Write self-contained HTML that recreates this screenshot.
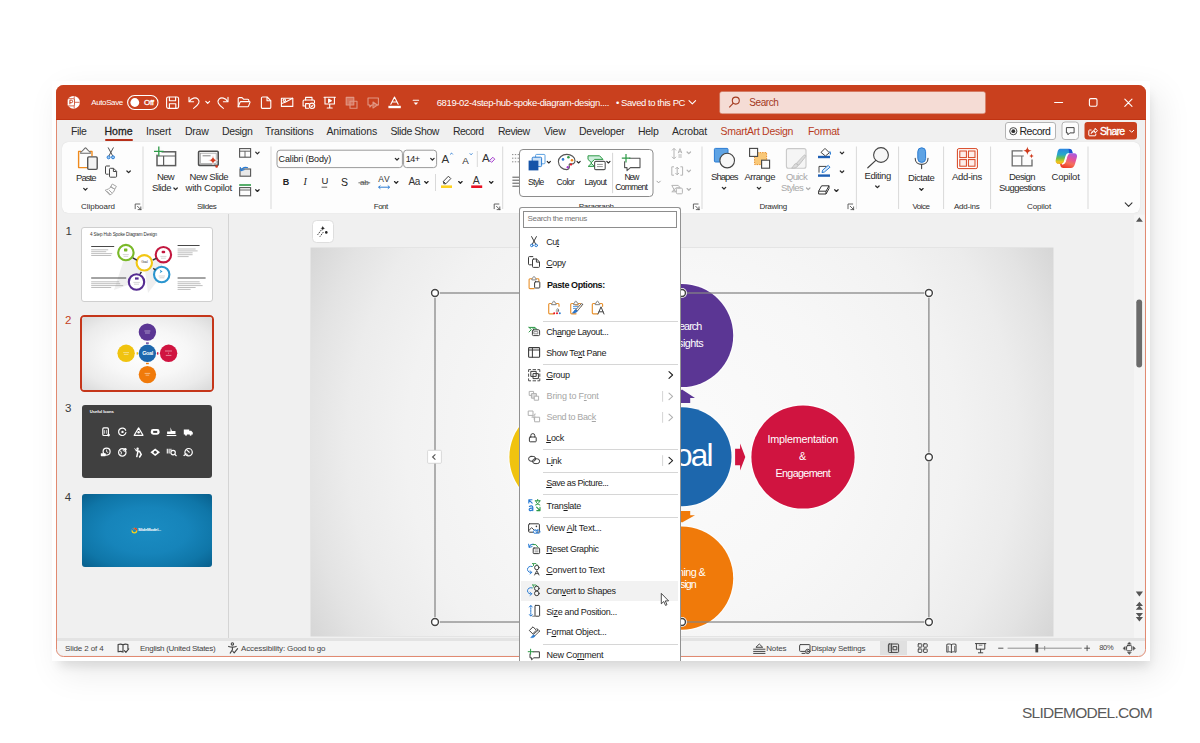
<!DOCTYPE html>
<html>
<head>
<meta charset="utf-8">
<title>PowerPoint</title>
<style>
*{box-sizing:border-box;margin:0;padding:0}
html,body{width:1200px;height:743px;overflow:hidden;background:#fff}
body{font-family:"Liberation Sans",sans-serif;color:#222;position:relative;font-size:10px;line-height:1}
.a{position:absolute}
.t{position:absolute;white-space:nowrap;line-height:1.16}
svg{position:absolute;left:0;top:0;overflow:visible}
#frame{left:52px;top:81px;width:1098px;height:580px;background:#fff;box-shadow:9px 12px 32px rgba(0,0,0,.085),3px 9px 10px -4px rgba(0,0,0,.10)}
#win{left:55.500px;top:85px;width:1090.500px;height:571.800px;border-radius:7.500px;background:#f0f0f0;border:1.700px solid #e18a71}
#title{left:55.500px;top:85px;width:1090.500px;height:34.500px;background:#c9401e;border-radius:7.500px 7.500px 0 0;border-bottom:1px solid #c03312}
#ribbon{left:62px;top:141.500px;width:1078px;height:71.700px;background:#fdfdfd;border-radius:6px;box-shadow:0 0 1px rgba(0,0,0,.15)}
.vs{width:1px;background:#dcdcdc;top:147px;height:60px}
u{text-decoration-thickness:1px;text-underline-offset:1px}
</style>
</head>
<body>
<div class="a" id="frame"></div>
<div class="a" id="win"></div>
<div class="a" id="title"></div>
<div class="a" id="ribbon"></div>
<svg width="1200" height="743" viewBox="0 0 1200 743"><circle cx="73.5" cy="102.3" r="6.400" fill="#fff"/><path d="M74.200 96.200v12.200M74.200 102.300h5.600" stroke="#c9401e" stroke-width=".9" opacity=".85"/><rect x="67.300" y="98.700" width="7.200" height="7.200" rx="1.200" fill="#fff" stroke="#c9401e" stroke-width=".8"/><path d="M69.900 104.300v-4.100h1.500a1.250 1.250 0 0 1 0 2.500h-1.500" stroke="#c9401e" stroke-width="1" fill="none"/><rect x="127.6" y="95.5" width="30.4" height="14" rx="7" stroke="#fff" fill="none" stroke-width="1.1" stroke-linecap="round" stroke-linejoin="round" stroke-width="1.2"/><circle cx="134.8" cy="102.5" r="4.4" fill="#fff"/><g stroke="#fff" fill="none" stroke-width="1.1" stroke-linecap="round" stroke-linejoin="round"><rect x="166.6" y="97" width="12" height="11.4" rx="1.6"/><path d="M169.4 97.2v3.6h6.2v-3.6M169.4 108.2v-4.4h6.4v4.4"/></g><g stroke="#fff" fill="none" stroke-width="1.1" stroke-linecap="round" stroke-linejoin="round"><path d="M189 97.2v4.6h4.6"/><path d="M189.4 101.4c2-3.4 6.3-4.6 8.6-2.2 2.4 2.5 .8 5.400 -4.400 9.200"/></g><path d="M205.8 101.4l1.9 1.9 1.900 -1.900" stroke="#fff" fill="none" stroke-width="1.1" stroke-linecap="round" stroke-linejoin="round"/><g stroke="#fff" fill="none" stroke-width="1.1" stroke-linecap="round" stroke-linejoin="round"><path d="M228 97.2v4.6h-4.6"/><path d="M227.600 101.400c-2 -3.400 -6.300 -4.600 -8.600 -2.200 -2.400 2.500 -.8 5.400 4.400 9.200"/></g><g stroke="#fff" fill="none" stroke-width="1.1" stroke-linecap="round" stroke-linejoin="round"><path d="M238.200 106.800v-8.200a1 1 0 0 1 1 -1h2.800l1.500 1.600h4.300a1 1 0 0 1 1 1v1.300"/><path d="M238.200 106.800l1.800 -4.600a1 1 0 0 1 .9 -.6h8.500a.6 .6 0 0 1 .6 .800l-1.500 3.700a1 1 0 0 1 -.9 .7z"/></g><g stroke="#fff" fill="none" stroke-width="1.1" stroke-linecap="round" stroke-linejoin="round"><path d="M262.600 97h4.500l3.700 3.700v6.500a1.200 1.200 0 0 1 -1.200 1.200h-7a1.200 1.200 0 0 1 -1.200 -1.200v-9a1.200 1.200 0 0 1 1.200 -1.200z"/><path d="M267 97.200v3.600h3.600"/></g><g stroke="#fff" fill="none" stroke-width="1.1" stroke-linecap="round" stroke-linejoin="round"><path d="M281.400 98.200h11.400v8.200h-11.400z"/><path d="M281.600 103.400l3.600 -1.200 7.400 -4"/><circle cx="284.300" cy="100.200" r="1.200"/></g><g stroke="#fff" fill="none" stroke-width="1.1" stroke-linecap="round" stroke-linejoin="round"><path d="M305.600 100v-2.600h6.400v2.600"/><path d="M305.400 106h-2.300v-4.800a1.200 1.200 0 0 1 1.200 -1.200h9a1.200 1.200 0 0 1 1.200 1.200v1.600"/><path d="M305.600 103.600h3.400M305.600 103.600v4.600h3"/><circle cx="312" cy="105.800" r="2.700"/><path d="M310.900 105.900l.8 .8 1.500 -1.700"/></g><g stroke="#fff" fill="none" stroke-width="1.1" stroke-linecap="round" stroke-linejoin="round"><path d="M324 97.200h11.400M325 97.400v6.600h9.400v-6.600M329.700 104v3.800M327.200 108h5"/><path d="M328.600 99l2.800 1.700 -2.800 1.700z" fill="#fff"/></g><g stroke="#fff" fill="none" stroke-width="1.1" stroke-linecap="round" stroke-linejoin="round" opacity=".45"><rect x="346.200" y="97.400" width="7.600" height="7.600" fill="#fff" fill-opacity=".6"/><rect x="350" y="101.200" width="7" height="7"/></g><g stroke="#fff" fill="none" stroke-width="1.1" stroke-linecap="round" stroke-linejoin="round" opacity=".45"><path d="M368 98h10.400v7h-6.600l-2 2v-2H368z"/><path d="M373 102l4.400 3 -4.400 3z"/></g><g stroke="#fff" fill="none" stroke-width="1.1" stroke-linecap="round" stroke-linejoin="round"><path d="M390.800 104.200l3.700 -7.200 3.700 7.200M392 102h5"/></g><rect x="388.400" y="105.800" width="12.400" height="2.400" fill="#fff"/><path d="M413.200 100.200h5.400" stroke="#fff" fill="none" stroke-width="1.1" stroke-linecap="round" stroke-linejoin="round"/><path d="M413.600 102.600h4.600l-2.300 2.500z" fill="#fff"/><rect x="719.600" y="91.500" width="266" height="22.300" rx="2.500" fill="#f5dcd5" stroke="#c9674d" stroke-width=".5"/><g stroke="#a33a1f" fill="none" stroke-width="1.100"><circle cx="735.800" cy="100.600" r="3.500"/><path d="M733.300 103.200l-4 4.200"/></g><path d="M689 100.600l3.300 3.300 3.300 -3.300" stroke="#fff" fill="none" stroke-width="1.1" stroke-linecap="round" stroke-linejoin="round"/><path d="M1054.600 102.500h8" stroke="#fff" fill="none" stroke-width="1.1" stroke-linecap="round" stroke-linejoin="round"/><rect x="1089.400" y="98.600" width="7.600" height="7.600" rx="1.400" stroke="#fff" fill="none" stroke-width="1.1" stroke-linecap="round" stroke-linejoin="round"/><path d="M1124.800 99.200l7.200 7.200M1132 99.200l-7.200 7.200" stroke="#fff" fill="none" stroke-width="1.1" stroke-linecap="round" stroke-linejoin="round"/></svg><div class="t" id="t1" style="left:91.3px;top:97.96px;font-size:8px;color:#fff;letter-spacing:-0.4px;">AutoSave</div><div class="t" id="t2" style="left:144px;top:97.96px;font-size:8px;color:#fff;letter-spacing:-0.31px;-webkit-text-stroke:.3px #fff;">Off</div><div class="t" id="t3" style="left:436.7px;top:96.89px;font-size:9.5px;color:#fff;letter-spacing:-0.374px;">6819-02-4step-hub-spoke-diagram-design....</div><div class="t" id="t4" style="left:616px;top:96.89px;font-size:9.5px;color:#fff;letter-spacing:-0.43px;">• Saved to this PC</div><div class="t" id="t5" style="left:749.3px;top:97.0px;font-size:10px;color:#a3381d;letter-spacing:-0.415px;">Search</div><div class="t" id="t6" style="left:71px;top:125.11px;font-size:10.5px;color:#2b2b2b;letter-spacing:-0.355px;">File</div><div class="t" id="t7" style="left:146px;top:125.11px;font-size:10.5px;color:#2b2b2b;letter-spacing:-0.211px;">Insert</div><div class="t" id="t8" style="left:185px;top:125.11px;font-size:10.5px;color:#2b2b2b;letter-spacing:-0.254px;">Draw</div><div class="t" id="t9" style="left:222px;top:125.11px;font-size:10.5px;color:#2b2b2b;letter-spacing:-0.365px;">Design</div><div class="t" id="t10" style="left:265px;top:125.11px;font-size:10.5px;color:#2b2b2b;letter-spacing:-0.224px;">Transitions</div><div class="t" id="t11" style="left:326.5px;top:125.11px;font-size:10.5px;color:#2b2b2b;letter-spacing:-0.145px;">Animations</div><div class="t" id="t12" style="left:390.5px;top:125.11px;font-size:10.5px;color:#2b2b2b;letter-spacing:-0.403px;">Slide Show</div><div class="t" id="t13" style="left:453px;top:125.11px;font-size:10.5px;color:#2b2b2b;letter-spacing:-0.56px;">Record</div><div class="t" id="t14" style="left:498px;top:125.11px;font-size:10.5px;color:#2b2b2b;letter-spacing:-0.49px;">Review</div><div class="t" id="t15" style="left:544px;top:125.11px;font-size:10.5px;color:#2b2b2b;letter-spacing:-0.27px;">View</div><div class="t" id="t16" style="left:579px;top:125.11px;font-size:10.5px;color:#2b2b2b;letter-spacing:-0.264px;">Developer</div><div class="t" id="t17" style="left:638px;top:125.11px;font-size:10.5px;color:#2b2b2b;letter-spacing:-0.277px;">Help</div><div class="t" id="t18" style="left:672px;top:125.11px;font-size:10.5px;color:#2b2b2b;letter-spacing:-0.17px;">Acrobat</div><div class="t" id="t19" style="left:104.5px;top:125.11px;font-size:10.5px;color:#1e1e1e;letter-spacing:-0.004px;-webkit-text-stroke:.3px #1e1e1e;">Home</div><div class="a" style="left:105px;top:139.300px;width:27.500px;height:1.700px;background:#b7301a;border-radius:1px"></div><div class="t" id="t20" style="left:720.5px;top:125.11px;font-size:10.5px;color:#b83b1d;letter-spacing:-0.302px;">SmartArt Design</div><div class="t" id="t21" style="left:808px;top:125.11px;font-size:10.5px;color:#b83b1d;letter-spacing:-0.294px;">Format</div><div class="a" style="left:1004.500px;top:122px;width:51px;height:17.500px;border:1px solid #b4b4b4;border-radius:3px;background:#fdfdfd"></div><svg width="1200" height="743" viewBox="0 0 1200 743"><circle cx="1013.300" cy="131.200" r="3.600" fill="none" stroke="#333" stroke-width=".9"/><circle cx="1013.300" cy="131.200" r="1.900" fill="#333"/><rect x="1062" y="122" width="16.500" height="17.500" rx="3" fill="#fdfdfd" stroke="#b4b4b4"/><path d="M1066.400 127.600h7.700v5.300h-4.300l-1.900 1.900v-1.900h-1.500z" fill="none" stroke="#333" stroke-width=".9" stroke-linejoin="round"/><rect x="1084.500" y="122" width="52.500" height="17.500" rx="3" fill="#c9401e"/><g stroke="#fff" fill="none" stroke-width="1" stroke-linecap="round" stroke-linejoin="round"><path d="M1091.200 130h-1.600a.8 .8 0 0 0 -.8 .8v4.200a.8 .8 0 0 0 .8 .8h5.400a.8 .8 0 0 0 .8 -.8v-1"/><path d="M1091.400 133.200c.5 -2 1.700 -3 3.600 -3.200v-1.700l2.500 2.400 -2.500 2.400v-1.600c-1.500 0 -2.700 .5 -3.600 1.700z"/><path d="M1129.700 130.300l2 2 2 -2"/></g></svg><div class="t" id="t22" style="left:1019.5px;top:125.11px;font-size:10.5px;color:#222;letter-spacing:-0.477px;">Record</div><div class="t" id="t23" style="left:1100px;top:125.11px;font-size:10.5px;color:#fff;letter-spacing:-0.726px;-webkit-text-stroke:.35px #fff;">Share</div><svg width="1200" height="743" viewBox="0 0 1200 743"><path d="M143 146.500v62.500" stroke="#d9d9d9" stroke-width="1"/><path d="M271 146.500v62.500" stroke="#d9d9d9" stroke-width="1"/><path d="M502.7 146.500v62.500" stroke="#d9d9d9" stroke-width="1"/><path d="M702 146.500v62.500" stroke="#d9d9d9" stroke-width="1"/><path d="M856.4 146.500v62.500" stroke="#d9d9d9" stroke-width="1"/><path d="M898.6 146.500v62.500" stroke="#d9d9d9" stroke-width="1"/><path d="M943.6 146.500v62.500" stroke="#d9d9d9" stroke-width="1"/><path d="M990.6 146.500v62.500" stroke="#d9d9d9" stroke-width="1"/><path d="M1088 146.500v62.500" stroke="#d9d9d9" stroke-width="1"/><g fill="none" stroke-linejoin="round"><path d="M81 151.400h-2.400v16.200h8.600M89.800 151.400h2.200v4.800" stroke="#ef8a1d" stroke-width="1.400"/><path d="M80.600 153.200c0 -1.300 .6 -2 1.700 -2.200l2.700 -2.900c.3 -.3 .7 -.3 1 0l2.700 2.900c1.100 .2 1.700 .9 1.700 2.200z" stroke="#6a6a6a" stroke-width="1.100" fill="#fbfbfb"/><rect x="87.700" y="156.900" width="9.500" height="12.500" rx="1.100" stroke="#555" stroke-width="1.400" fill="#f4f4f4"/></g><path d="M83.70 188.35l1.70 1.70 1.70 -1.70" stroke="#2a2a2a" stroke-width="1.25" fill="none" stroke-linecap="round" stroke-linejoin="round"/><g fill="none" stroke="#444" stroke-width=".95" stroke-linecap="round"><path d="M108.300 147.800l4.300 8M113.300 147.800l-4.300 8"/></g><g fill="#9ccaf2" stroke="#2b7cd3" stroke-width="1"><circle cx="108.600" cy="157.300" r="1.500"/><circle cx="113" cy="157.300" r="1.500"/></g><g fill="none" stroke="#444" stroke-width="1" stroke-linejoin="round"><path d="M108.600 174.200h-2.200a.9 .9 0 0 1 -.9 -.9v-6.400a.9 .9 0 0 1 .9 -.9h3.500"/><path d="M110.400 168.300h3.200l3 3v5a.9 .9 0 0 1 -.9 .9h-5.300a.9 .9 0 0 1 -.9 -.9v-7.100a.9 .9 0 0 1 .9 -.9z" fill="#fbfbfb"/><path d="M113.400 168.500v3h3"/></g><path d="M126.90 170.95l1.70 1.70 1.70 -1.70" stroke="#2a2a2a" stroke-width="1.25" fill="none" stroke-linecap="round" stroke-linejoin="round"/><g fill="none" stroke="#a6a6a6" stroke-width="1" stroke-linejoin="round" stroke-linecap="round"><path d="M112.600 184.200l3.800 2.200 -1.600 2.800 -3.800 -2.200z"/><path d="M111 187l3.800 2.200c-.6 2.400 -2.400 4.600 -5 5.800l-4.600 -4.800c2.200 -.6 4.200 -1.600 5.800 -3.200zM107.400 191.600l2.200 2.200M109.400 190.400l2.200 2.200" /></g><g stroke="#555" stroke-width=".9" fill="none" stroke-linecap="square"><path d="M139.8 204.0h-4.600v4.600"/><path d="M137.6 206.4l3 3M140.8 209.6v-2.600M140.8 209.6h-2.600"/></g><g fill="none"><rect x="157" y="151.800" width="18.600" height="13.800" stroke="#5c5c5c" stroke-width="1.500"/><path d="M157 156h18.600M163.600 156v9.600" stroke="#5c5c5c" stroke-width="1.200"/><rect x="153.500" y="146.600" width="8" height="8" fill="#fbfbfb" stroke="none"/><path d="M158.800 146.600v9.600M154 151.400h9.600" stroke="#2e9a47" stroke-width="1.300"/></g><path d="M173.90 187.95l1.70 1.70 1.70 -1.70" stroke="#2a2a2a" stroke-width="1.25" fill="none" stroke-linecap="round" stroke-linejoin="round"/><g fill="none"><rect x="198.600" y="151.200" width="19.600" height="14.200" rx="1" stroke="#4f4f4f" stroke-width="1.600"/><rect x="200.600" y="153.200" width="15.600" height="10.200" stroke="#999" stroke-width=".7"/><path d="M202.600 155.800h8" stroke="#777" stroke-width=".9"/><path d="M213 155.400c.5 3.200 1.600 4.300 4.800 4.800 -3.200 .5 -4.300 1.600 -4.800 4.800 -.5 -3.200 -1.600 -4.300 -4.800 -4.800 3.200 -.5 4.300 -1.600 4.800 -4.800z" fill="#d13b1f" stroke="#fbfbfb" stroke-width=".6"/><circle cx="216.600" cy="166.400" r="1.300" fill="#d13b1f"/></g><g fill="none" stroke="#555" stroke-width="1.100"><rect x="239.600" y="148.600" width="11" height="8.600"/><path d="M239.600 151.200h11M245 151.200v6" stroke-width=".9"/></g><path d="M255.70 152.15l1.70 1.70 1.70 -1.70" stroke="#2a2a2a" stroke-width="1.25" fill="none" stroke-linecap="round" stroke-linejoin="round"/><g fill="none"><rect x="240" y="169" width="10.600" height="7.200" stroke="#555" stroke-width="1.100" fill="#e9e9e9"/><path d="M241.200 170.600c1 -3 4 -4 6.800 -2.800" stroke="#2b7cd3" stroke-width="1.200"/><path d="M240.200 167l.8 3.800 3.600 -1.200" stroke="#2b7cd3" stroke-width="1.100" stroke-linejoin="round"/></g><g fill="none"><rect x="239.600" y="187.600" width="11" height="8.200" stroke="#555" stroke-width="1.100"/><path d="M239.600 190h11" stroke="#555" stroke-width=".9"/><path d="M239.200 185h11.800" stroke="#2e9a47" stroke-width="1.600"/></g><path d="M255.70 189.75l1.70 1.70 1.70 -1.70" stroke="#2a2a2a" stroke-width="1.25" fill="none" stroke-linecap="round" stroke-linejoin="round"/><rect x="277" y="150.200" width="125.400" height="17.400" rx="3" fill="#fdfdfd" stroke="#8f8f8f" stroke-width=".9"/><rect x="403.600" y="150.200" width="33" height="17.400" rx="3" fill="#fdfdfd" stroke="#8f8f8f" stroke-width=".9"/><path d="M395.30 158.35l1.70 1.70 1.70 -1.70" stroke="#2a2a2a" stroke-width="1.25" fill="none" stroke-linecap="round" stroke-linejoin="round"/><path d="M430.70 158.35l1.70 1.70 1.70 -1.70" stroke="#2a2a2a" stroke-width="1.25" fill="none" stroke-linecap="round" stroke-linejoin="round"/><path d="M450.200 154.400l1.300 -1.300 1.300 1.300" stroke="#2b7cd3" stroke-width="1" fill="none"/><path d="M469.800 153.400l1.300 1.300 1.300 -1.300" stroke="#2b7cd3" stroke-width="1" fill="none"/><path d="M477.300 151v16" stroke="#d9d9d9"/><path d="M489.600 160.400l3.200 -3.200 2 2 -3.200 3.200z" fill="#f3e6fb" stroke="#a43cc9" stroke-width=".9" stroke-linejoin="round"/><path d="M321.600 187.200h5.600" stroke="#333" stroke-width=".8"/><path d="M358.400 182.800h11.800" stroke="#555" stroke-width=".8"/><g stroke="#2b7cd3" stroke-width="1" fill="none" stroke-linejoin="round"><path d="M378.600 187.200h11"/><path d="M380.400 185.600l-1.800 1.600 1.800 1.600M387.800 185.600l1.800 1.600 -1.800 1.600"/></g><path d="M394.50 181.55l1.70 1.70 1.70 -1.70" stroke="#2a2a2a" stroke-width="1.25" fill="none" stroke-linecap="round" stroke-linejoin="round"/><path d="M424.70 181.55l1.70 1.70 1.70 -1.70" stroke="#2a2a2a" stroke-width="1.25" fill="none" stroke-linecap="round" stroke-linejoin="round"/><path d="M435.500 174v17" stroke="#d9d9d9"/><rect x="441" y="185.400" width="11" height="2.600" fill="#ffd21f"/><g fill="none" stroke="#444" stroke-width="1" stroke-linejoin="round"><path d="M443.800 183.800l-.4 -2.400 5 -5.200 2.400 2.400 -5 5.200z"/><path d="M443.400 181.400l2.400 2.400"/></g><path d="M458.70 181.55l1.70 1.70 1.70 -1.70" stroke="#2a2a2a" stroke-width="1.25" fill="none" stroke-linecap="round" stroke-linejoin="round"/><rect x="471.200" y="185.400" width="11" height="2.600" fill="#e81123"/><path d="M489.50 181.55l1.70 1.70 1.70 -1.70" stroke="#2a2a2a" stroke-width="1.25" fill="none" stroke-linecap="round" stroke-linejoin="round"/><g stroke="#555" stroke-width=".9" fill="none" stroke-linecap="square"><path d="M498.8 204.0h-4.600v4.600"/><path d="M496.6 206.4l3 3M499.8 209.6v-2.600M499.8 209.6h-2.600"/></g></svg><div class="t" id="t24" style="left:76px;top:172.49px;font-size:9.5px;color:#2b2b2b;letter-spacing:-0.939px;">Paste</div><div class="t" id="t25" style="left:81px;top:201.96px;font-size:8px;color:#2e2e2e;letter-spacing:-0.028px;">Clipboard</div><div class="t" id="t26" style="left:157px;top:171.29px;font-size:9.5px;color:#2b2b2b;letter-spacing:-0.672px;">New</div><div class="t" id="t27" style="left:152px;top:182.49px;font-size:9.5px;color:#2b2b2b;letter-spacing:-0.425px;">Slide</div><div class="t" id="t28" style="left:189.6px;top:171.29px;font-size:9.5px;color:#2b2b2b;letter-spacing:-0.487px;">New Slide</div><div class="t" id="t29" style="left:185.6px;top:182.49px;font-size:9.5px;color:#2b2b2b;letter-spacing:-0.226px;">with Copilot</div><div class="t" id="t30" style="left:197px;top:201.96px;font-size:8px;color:#2e2e2e;letter-spacing:-0.399px;">Slides</div><div class="t" id="t31" style="left:278.6px;top:153.78px;font-size:9px;color:#222;letter-spacing:-0.151px;">Calibri (Body)</div><div class="t" id="t32" style="left:405.8px;top:153.78px;font-size:9px;color:#222;letter-spacing:-0.56px;">14+</div><div class="t" id="t33" style="left:441.6px;top:152.73px;font-size:11.5px;color:#333;letter-spacing:0.328px;">A</div><div class="t" id="t34" style="left:462.2px;top:154.52px;font-size:9.8px;color:#333;letter-spacing:0.453px;">A</div><div class="t" id="t35" style="left:482px;top:152.13px;font-size:11.5px;color:#333;letter-spacing:-0.072px;">A</div><div class="t" id="t36" style="left:282.8px;top:176.98px;font-size:9px;color:#222;font-weight:700;letter-spacing:-0.9px;">B</div><div class="t" id="t37" style="left:303.4px;top:176.2px;font-size:10px;color:#222;letter-spacing:0.256px;font-family:'Liberation Serif',serif;font-style:italic;">I</div><div class="t" id="t38" style="left:321.4px;top:175.49px;font-size:9.5px;color:#222;letter-spacing:-1.075px;">U</div><div class="t" id="t39" style="left:341px;top:175.91px;font-size:10.5px;color:#222;letter-spacing:-1.416px;">S</div><div class="t" id="t40" style="left:360px;top:177.56px;font-size:8px;color:#555;letter-spacing:-0.153px;">ab</div><div class="t" id="t41" style="left:378.2px;top:174.67px;font-size:8.5px;color:#333;letter-spacing:0.741px;">AV</div><div class="t" id="t42" style="left:408.4px;top:176.2px;font-size:10px;color:#333;letter-spacing:-0.217px;">Aa</div><div class="t" id="t43" style="left:472.8px;top:173.91px;font-size:10.5px;color:#333;letter-spacing:0.784px;">A</div><div class="t" id="t44" style="left:373.8px;top:201.96px;font-size:8px;color:#2e2e2e;letter-spacing:-0.504px;">Font</div><svg width="1200" height="743" viewBox="0 0 1200 743"><g stroke="#8a8a8a" stroke-width="1" stroke-dasharray="1.400 1.400"><path d="M512 154.600h7M512 158.200h7M512 161.800h7"/></g><g stroke="#555" stroke-width="1"><path d="M512.400 177.200h7M512.400 180.200h7M512.400 183.200h7M512.400 186.200h7"/></g><rect x="519.500" y="149.500" width="133.500" height="47" rx="3.500" fill="#fff" stroke="#8c8c8c" stroke-width="1"/><g stroke-linejoin="round"><rect x="535.600" y="154.400" width="9.400" height="9.400" rx="1" fill="#fff" stroke="#5aa0e0" stroke-width="1"/><rect x="532.200" y="157.200" width="9.400" height="9.400" rx="1" fill="#cfe3f7" stroke="#2b7cd3" stroke-width="1"/><rect x="528.600" y="160.600" width="9.800" height="9.800" fill="#1553a8"/></g><path d="M547.20 161.40l1.60 1.60 1.60 -1.60" stroke="#222" stroke-width="1.1" fill="none" stroke-linecap="round" stroke-linejoin="round"/><path d="M566.800 154.400c4.600 0 8.200 2.800 8.200 6.400 0 2.600 -2.200 3.400 -3.800 3 -1.400 -.4 -2.400 .4 -2 1.800 .6 1.800 -.2 4 -2.400 4 -4 0 -8.400 -3 -8.400 -8 0 -4 3.800 -7.200 8.400 -7.200z" fill="#fff" stroke="#555" stroke-width="1.100"/><circle cx="563" cy="159.400" r="1.300" fill="#2b7cd3"/><circle cx="568.400" cy="157.200" r="1.300" fill="#2e9a47"/><circle cx="572" cy="160.200" r="1.300" fill="#f28a1a"/><circle cx="567.800" cy="167.200" r="1.200" fill="#a43cc9"/><circle cx="571" cy="164.600" r="1.100" fill="#e81123"/><path d="M577.00 161.40l1.60 1.60 1.60 -1.60" stroke="#222" stroke-width="1.1" fill="none" stroke-linecap="round" stroke-linejoin="round"/><path d="M588 155.800h11.600l3.400 3.600h-8.400l-3.800 3.600 3.800 3.400h-6.400l3.600 -3.400 -3.800 -3.600z" fill="#cfeedd" stroke="#2e9a47" stroke-width="1" stroke-linejoin="round"/><rect x="594.600" y="161.400" width="10.600" height="8.200" rx="1.200" fill="#fff" stroke="#555" stroke-width="1.100"/><path d="M597 164.400h5.800M597 166.600h5.800" stroke="#777" stroke-width=".8"/><path d="M606.80 161.40l1.60 1.60 1.60 -1.60" stroke="#222" stroke-width="1.1" fill="none" stroke-linecap="round" stroke-linejoin="round"/><path d="M612.600 152.800v40.400" stroke="#d5d5d5"/><path d="M624.600 158.200h15.400v9.400h-9.600l-3.400 3v-3h-2.400z" fill="#fff" stroke="#555" stroke-width="1.100" stroke-linejoin="round"/><rect x="621.500" y="153.800" width="7.500" height="7.500" fill="#fff"/><path d="M626 154v8.600M621.800 158.200h8.600" stroke="#2e9a47" stroke-width="1.200"/><path d="M656.90 181.15l1.70 1.70 1.70 -1.70" stroke="#a0a0a0" stroke-width="1" fill="none" stroke-linecap="round" stroke-linejoin="round"/><g stroke="#b4b4b4" stroke-width="1" fill="none" stroke-linejoin="round"><path d="M674 148.600v10M672 156.800l2 2 2 -2M672 150.400l2 -2 2 2"/><path d="M678.200 153.200l1.800 -4.600 1.800 4.600M678.800 151.800h2.400M678.400 155h3.400M678.400 157h3.400"/><path d="M674 166.800h-2.200v8.400h2.200M680.400 166.800h2.200v8.400h-2.200M677.200 167v8M675.400 169l1.800 -1.800 1.800 1.800M675.400 173l1.800 1.800 1.800 -1.800"/><path d="M671.800 185.400h6.400l2 2.400h-4l-2.400 2 2.400 2h-4.400l2.400 -2z"/><rect x="676.400" y="188.200" width="6" height="5.600" rx="1" fill="#fbfbfb"/></g><path d="M687.10 151.95l1.70 1.70 1.70 -1.70" stroke="#b4b4b4" stroke-width="1.25" fill="none" stroke-linecap="round" stroke-linejoin="round"/><path d="M687.10 170.15l1.70 1.70 1.70 -1.70" stroke="#b4b4b4" stroke-width="1.25" fill="none" stroke-linecap="round" stroke-linejoin="round"/><path d="M687.10 188.55l1.70 1.70 1.70 -1.70" stroke="#b4b4b4" stroke-width="1.25" fill="none" stroke-linecap="round" stroke-linejoin="round"/><g stroke="#555" stroke-width=".9" fill="none" stroke-linecap="square"><path d="M698.0 204.0h-4.600v4.600"/><path d="M695.8 206.4l3 3M699.0 209.6v-2.600M699.0 209.6h-2.600"/></g><rect x="714.400" y="148.400" width="13.600" height="13.600" rx="1" fill="#5ea3e4" stroke="#2b7cd3" stroke-width="1"/><circle cx="727.200" cy="160.600" r="7.300" fill="#f7f7f7" stroke="#444" stroke-width="1.100"/><path d="M722.30 187.35l1.70 1.70 1.70 -1.70" stroke="#2a2a2a" stroke-width="1.25" fill="none" stroke-linecap="round" stroke-linejoin="round"/><rect x="754.600" y="152.600" width="12" height="12" fill="#f9c878" stroke="#e8912d" stroke-width="1" stroke-dasharray="1.500 1"/><rect x="749.600" y="148.400" width="8" height="8" fill="#fbfbfb" stroke="#444" stroke-width="1.100"/><rect x="761.600" y="160.200" width="8" height="8" fill="#fbfbfb" stroke="#444" stroke-width="1.100"/><path d="M757.30 187.35l1.70 1.70 1.70 -1.70" stroke="#2a2a2a" stroke-width="1.25" fill="none" stroke-linecap="round" stroke-linejoin="round"/><rect x="786.400" y="148.600" width="19.600" height="19.600" rx="2" fill="#f5f5f5" stroke="#c9c9c9" stroke-width="1.100"/><path d="M805.600 156.600l-6.800 8.600 -2.400 -1.800 7.400 -8c1 -1 2.600 .2 1.800 1.200zM796 163.600c-2.200 0 -2 3 -4.400 4.400 3 .6 6 -.6 6.600 -2.800z" fill="#dcdcdc" stroke="#b9b9b9" stroke-width=".8" stroke-linejoin="round"/><path d="M806.50 187.95l1.70 1.70 1.70 -1.70" stroke="#a9a9a9" stroke-width="1.25" fill="none" stroke-linecap="round" stroke-linejoin="round"/><rect x="818" y="155.800" width="12" height="2.400" fill="#1e5fb4"/><path d="M821 152.400l4 -4 4.400 4.400 -4 3.200z" fill="#fff" stroke="#444" stroke-width="1" stroke-linejoin="round"/><path d="M829.600 151.400c1 1.600 1.400 2.400 .2 3" stroke="#2b7cd3" stroke-width="1.100" fill="none"/><path d="M840.30 152.15l1.70 1.70 1.70 -1.70" stroke="#2a2a2a" stroke-width="1.25" fill="none" stroke-linecap="round" stroke-linejoin="round"/><rect x="818" y="174.400" width="12" height="2.400" fill="#1e5fb4"/><path d="M819 172.600v-6.200h7.600" fill="none" stroke="#444" stroke-width="1"/><path d="M822 172.600l.6 -2.400 5.600 -4.800 1.800 1.800 -5.600 4.800z" fill="#dbeaf9" stroke="#2b7cd3" stroke-width="1" stroke-linejoin="round"/><path d="M840.30 170.95l1.70 1.70 1.70 -1.70" stroke="#2a2a2a" stroke-width="1.25" fill="none" stroke-linecap="round" stroke-linejoin="round"/><path d="M818.600 191.200l3 -5.400h7.400l-3 5.400zM818.600 191.200v2.800h7.400v-2.800M826 194l3 -5.400v-2.800" fill="#fff" stroke="#333" stroke-width="1" stroke-linejoin="round"/><path d="M834.70 189.75l1.70 1.70 1.70 -1.70" stroke="#2a2a2a" stroke-width="1.25" fill="none" stroke-linecap="round" stroke-linejoin="round"/><g stroke="#555" stroke-width=".9" fill="none" stroke-linecap="square"><path d="M852.6 204.0h-4.600v4.600"/><path d="M850.4 206.4l3 3M853.6 209.6v-2.600M853.6 209.6h-2.600"/></g><circle cx="881" cy="155" r="7.400" fill="#f7f7f7" stroke="#444" stroke-width="1.100"/><path d="M875.800 160.400l-8 7.400" stroke="#444" stroke-width="1.200" stroke-linecap="round"/><path d="M875.70 185.95l1.70 1.70 1.70 -1.70" stroke="#2a2a2a" stroke-width="1.25" fill="none" stroke-linecap="round" stroke-linejoin="round"/><rect x="917.800" y="147.800" width="7.800" height="14.600" rx="3.900" fill="#5ea3e4" stroke="#2b7cd3" stroke-width="1"/><path d="M915.200 158.400c0 3.800 3 6 6.400 6s6.400 -2.200 6.400 -6M921.600 164.600v4" fill="none" stroke="#444" stroke-width="1.100" stroke-linecap="round"/><path d="M919.70 188.55l1.70 1.70 1.70 -1.70" stroke="#2a2a2a" stroke-width="1.25" fill="none" stroke-linecap="round" stroke-linejoin="round"/><g fill="#fdeeea" stroke="#d8431f" stroke-width="1"><rect x="957.400" y="148.600" width="20" height="20" rx="1.500" fill="#fff"/><rect x="959.800" y="151" width="6.600" height="6.600"/><rect x="968.400" y="151" width="6.600" height="6.600"/><rect x="959.800" y="159.600" width="6.600" height="6.600"/><rect x="968.400" y="159.600" width="6.600" height="6.600"/></g><g fill="none" stroke="#6a6a6a" stroke-width="1.300"><path d="M1022.600 150.800h-10.400v15h19.800v-6.400"/><path d="M1012.200 156h11.600M1021.800 156v9.800" stroke-width="1.100"/></g><path d="M1027.400 146.400c.5 3 1.300 3.800 4.300 4.300 -3 .5 -3.800 1.300 -4.300 4.300 -.5 -3 -1.300 -3.800 -4.300 -4.300 3 -.5 3.800 -1.300 4.300 -4.300z" fill="#cf3a1c"/><path d="M1031.500 153.600c.3 1.700 .8 2.200 2.500 2.500 -1.700 .3 -2.200 .8 -2.500 2.500 -.3 -1.700 -.8 -2.200 -2.500 -2.500 1.700 -.3 2.200 -.8 2.500 -2.500z" fill="#cf3a1c"/><defs><linearGradient id="cpa" x1="0" y1="0" x2="0" y2="1"><stop offset="0" stop-color="#2a86e2"/><stop offset=".38" stop-color="#28a8c8"/><stop offset=".62" stop-color="#6cc04a"/><stop offset=".85" stop-color="#e9c61c"/><stop offset="1" stop-color="#f3a81c"/></linearGradient><linearGradient id="cpb" x1=".7" y1="0" x2=".3" y2="1"><stop offset="0" stop-color="#a95ae0"/><stop offset=".35" stop-color="#e4519c"/><stop offset=".65" stop-color="#f5705a"/><stop offset="1" stop-color="#ee3a24"/></linearGradient></defs><path d="M1060 148.800h9.200c1.400 0 2.400 .8 2.800 2l.7 2.400h-3c-1.600 0 -2.500 .8 -2.900 2.200l-1.800 6c-.5 1.600 -1.500 2.600 -3.300 2.600h-2.600c-2.600 0 -4 -1.800 -3.300 -4.200l1.600 -7.400c.5 -2.400 1.400 -3.600 2.600 -3.600z" fill="url(#cpa)"/><path d="M1068.600 149c1.800 -.2 3 .6 3.400 1.800l.7 2.400h-3.400z" fill="#1d4fd0"/><path d="M1072.500 153.200h1.600c2.400 0 3.400 1.800 2.800 4l-2 7c-.7 2.400 -2 3.700 -4 3.700h-7.600c-1.400 0 -2.400 -.8 -2.800 -2l-.5 -1.900h2.700c1.600 0 2.700 -.9 3.200 -2.500l1.800 -6c.5 -1.600 1.500 -2.300 3 -2.300z" fill="url(#cpb)"/><path d="M1068.700 153.600c-1.400 .2 -2.100 1 -2.500 2.300l-1.800 6c-.4 1.300 -1.200 2.100 -2.400 2.300 1.400 -.1 2.300 -.9 2.700 -2.300l1.800 -6c.4 -1.300 1.100 -2.100 2.200 -2.300z" fill="#fff" stroke="#fff" stroke-width="1.300"/><path d="M1125.20 202.90l3.40 3.40 3.40 -3.40" stroke="#333" stroke-width="1.1" fill="none" stroke-linecap="round" stroke-linejoin="round"/></svg><div class="t" id="t45" style="left:528px;top:177.67px;font-size:8.5px;color:#222;letter-spacing:-0.661px;">Style</div><div class="t" id="t46" style="left:556.6px;top:177.67px;font-size:8.5px;color:#222;letter-spacing:-0.503px;">Color</div><div class="t" id="t47" style="left:584.4px;top:177.67px;font-size:8.5px;color:#222;letter-spacing:-0.589px;">Layout</div><div class="t" id="t48" style="left:624.4px;top:173.07px;font-size:8.5px;color:#222;letter-spacing:-1.005px;">New</div><div class="t" id="t49" style="left:615.2px;top:183.27px;font-size:8.5px;color:#222;letter-spacing:-0.692px;">Comment</div><div class="t" id="t50" style="left:578.8px;top:201.76px;font-size:8px;color:#2e2e2e;letter-spacing:-0.262px;">Paragraph</div><div class="t" id="t51" style="left:711px;top:171.29px;font-size:9.5px;color:#2b2b2b;letter-spacing:-0.939px;">Shapes</div><div class="t" id="t52" style="left:744.4px;top:171.29px;font-size:9.5px;color:#2b2b2b;letter-spacing:-0.459px;">Arrange</div><div class="t" id="t53" style="left:786px;top:171.29px;font-size:9.5px;color:#a9a9a9;letter-spacing:-0.659px;">Quick</div><div class="t" id="t54" style="left:781px;top:182.49px;font-size:9.5px;color:#a9a9a9;letter-spacing:-0.646px;">Styles</div><div class="t" id="t55" style="left:759.4px;top:201.96px;font-size:8px;color:#2e2e2e;letter-spacing:-0.249px;">Drawing</div><div class="t" id="t56" style="left:864.4px;top:170.29px;font-size:9.5px;color:#2b2b2b;letter-spacing:-0.352px;">Editing</div><div class="t" id="t57" style="left:908px;top:172.49px;font-size:9.5px;color:#2b2b2b;letter-spacing:-0.454px;">Dictate</div><div class="t" id="t58" style="left:912.4px;top:201.96px;font-size:8px;color:#2e2e2e;letter-spacing:-0.476px;">Voice</div><div class="t" id="t59" style="left:952px;top:171.29px;font-size:9.5px;color:#2b2b2b;letter-spacing:-0.317px;">Add-ins</div><div class="t" id="t60" style="left:954px;top:201.96px;font-size:8px;color:#2e2e2e;letter-spacing:-0.246px;">Add-ins</div><div class="t" id="t61" style="left:1009px;top:171.29px;font-size:9.5px;color:#2b2b2b;letter-spacing:-0.596px;">Design</div><div class="t" id="t62" style="left:999px;top:182.49px;font-size:9.5px;color:#2b2b2b;letter-spacing:-0.572px;">Suggestions</div><div class="t" id="t63" style="left:1051.6px;top:171.29px;font-size:9.5px;color:#2b2b2b;letter-spacing:-0.225px;">Copilot</div><div class="t" id="t64" style="left:1027px;top:201.96px;font-size:8px;color:#2e2e2e;letter-spacing:-0.129px;">Copilot</div><div class="a" style="left:228px;top:214px;width:1px;height:426px;background:#d4d4d4"></div><div class="t" id="t65" style="left:65.4px;top:225.03px;font-size:11.5px;color:#3a3a3a;">1</div><div class="t" id="t66" style="left:65px;top:313.83px;font-size:11.5px;color:#c43e1c;">2</div><div class="t" id="t67" style="left:65px;top:402.23px;font-size:11.5px;color:#3a3a3a;">3</div><div class="t" id="t68" style="left:64.8px;top:490.63px;font-size:11.5px;color:#3a3a3a;">4</div><div class="a" style="left:81px;top:227px;width:132px;height:75.200px;background:#fff;border:1px solid #cfcfcf;border-radius:3px"></div><div class="a" style="left:79.800px;top:314.500px;width:134.700px;height:77.500px;border:2px solid #c5361a;border-radius:4.500px;background:#fff"></div><div class="a" style="left:82.300px;top:317px;width:129.700px;height:72.500px;border-radius:2px;background:radial-gradient(ellipse farthest-corner at center,#fff 0%,#f7f7f7 45%,#ebebeb 75%,#d9d9d9 100%)"></div><div class="a" style="left:82.200px;top:405.400px;width:129.800px;height:72.600px;background:#404040;border-radius:3px"></div><div class="a" style="left:82.200px;top:493.800px;width:129.800px;height:73px;border-radius:3px;background:radial-gradient(ellipse farthest-corner at center,#1a8cc2 0%,#1684ba 45%,#0f76a8 75%,#085f8c 100%)"></div><svg width="1200" height="743" viewBox="0 0 1200 743"><g opacity=".16"><path d="M126 253l18 10 -8 19 -22 8z M144 263l18 -8 0 20 -14 18z" fill="#999"/></g><circle cx="125.9" cy="252.6" r="7.700" fill="#fff" stroke="#7ab929" stroke-width="2.100"/><circle cx="163.4" cy="254.7" r="7.700" fill="#fff" stroke="#c3173f" stroke-width="2.100"/><circle cx="161.7" cy="274.5" r="7.700" fill="#fff" stroke="#2a95cf" stroke-width="2.100"/><circle cx="136.5" cy="282" r="7.700" fill="#fff" stroke="#552c91" stroke-width="2.100"/><circle cx="144.3" cy="262.8" r="7.700" fill="#fff" stroke="#f2c714" stroke-width="2.100"/><g stroke="#333" stroke-width="1.400"><path d="M132.800 257.800l4 2.400M156.400 258.400l-3.600 1.600M153.200 268.400l2.400 1.600M141.400 271.800l-1.400 2.200"/></g><g fill="#7ab929"><rect x="124" y="248.400" width="3.400" height="3" rx=".6"/></g><rect x="161.600" y="250.800" width="3.600" height="2.400" rx="1" fill="#c3173f"/><path d="M159.600 269.600l3 1.800 -3 1.800 1 -1.800z" fill="#2a95cf"/><rect x="135" y="277.400" width="3.600" height="2.200" fill="#552c91"/><g stroke="#aaa" stroke-width=".5"><path d="M122.800 254.600h6M123.600 256.400h4.600M160.400 256.400h6M161 258.200h4.800M158.600 276h6.400M159.400 277.800h5M133.400 282.400h6.400M134 284.200h5"/></g><path d="M91.2 246.5h23.0" stroke="#333" stroke-width="0.9"/><path d="M91.2 249.8h17.0" stroke="#888" stroke-width="0.55"/><path d="M91.2 251.7h15.0" stroke="#888" stroke-width="0.55"/><path d="M91.2 253.6h21.0" stroke="#888" stroke-width="0.55"/><path d="M91.2 255.5h20.0" stroke="#888" stroke-width="0.55"/><path d="M177.6 245.5h22.0" stroke="#333" stroke-width="0.9"/><path d="M177.6 249.0h18.0" stroke="#888" stroke-width="0.55"/><path d="M177.6 250.9h20.0" stroke="#888" stroke-width="0.55"/><path d="M177.6 252.8h15.0" stroke="#888" stroke-width="0.55"/><path d="M177.6 254.7h15.0" stroke="#888" stroke-width="0.55"/><path d="M177.6 256.6h11.0" stroke="#888" stroke-width="0.55"/><path d="M91.2 278.0h35.0" stroke="#333" stroke-width="0.9"/><path d="M91.2 281.8h28.0" stroke="#888" stroke-width="0.55"/><path d="M91.2 283.7h29.0" stroke="#888" stroke-width="0.55"/><path d="M91.2 285.6h32.0" stroke="#888" stroke-width="0.55"/><path d="M91.2 287.5h20.0" stroke="#888" stroke-width="0.55"/><path d="M177.6 278.0h28.0" stroke="#333" stroke-width="0.9"/><path d="M177.6 281.8h22.0" stroke="#888" stroke-width="0.55"/><path d="M177.6 283.7h23.0" stroke="#888" stroke-width="0.55"/><path d="M177.6 285.6h25.0" stroke="#888" stroke-width="0.55"/><path d="M177.6 287.5h18.0" stroke="#888" stroke-width="0.55"/><path d="M177.6 289.4h13.0" stroke="#888" stroke-width="0.55"/><circle cx="147.4" cy="332.1" r="8.700" fill="#5b3694"/><circle cx="126.1" cy="353.3" r="8.700" fill="#f0c30f"/><circle cx="168.6" cy="353.3" r="8.700" fill="#d01440"/><circle cx="147.4" cy="374.6" r="8.700" fill="#f07a0a"/><circle cx="147.4" cy="353.3" r="8.700" fill="#1d67ad"/><rect x="146" y="342.400" width="2.800" height="1.400" fill="#5b3694"/><rect x="136.600" y="352.200" width="1.400" height="2.400" fill="#f0c30f"/><rect x="157" y="352.200" width="1.400" height="2.400" fill="#d01440"/><rect x="146" y="362.800" width="2.800" height="1.400" fill="#f07a0a"/><g stroke="#fff" stroke-width=".6" opacity=".8"><path d="M144.400 331h6M145 333h4.800M123.200 352.600h5.800M123.800 354.400h4.600M165 351h7M168 353.200h1M165.800 355.400h5.600M144.600 373.400h5.600M145.600 375.200h3.600"/></g><g transform="translate(105.6 431.7)"><rect x="-2.800" y="-3.800" width="5.600" height="7.600" rx="1" fill="none" stroke="#fff" stroke-width="1.200" stroke-linejoin="round" stroke-linecap="round"/><path d="M-1.200 -1.600v3.600M.8 -1.600v3.600" stroke="#fff" stroke-width=".7"/><circle cx="3" cy="3.400" r="1.300" fill="#fff"/></g><g transform="translate(122.3 431.7)"><path d="M3.400 -1.400a3.700 3.700 0 1 0 .2 2.400" fill="none" stroke="#fff" stroke-width="1.200" stroke-linejoin="round" stroke-linecap="round" stroke-width="1.500"/><circle cx=".2" cy=".2" r="1.200" fill="#fff"/></g><g transform="translate(138.6 431.7)"><path d="M0 -3.800l4.400 7.400h-8.800z" fill="none" stroke="#fff" stroke-width="1.200" stroke-linejoin="round" stroke-linecap="round"/><circle cx="0" cy=".6" r="1.200" fill="#fff"/></g><g transform="translate(155.2 431.7)"><rect x="-4.400" y="-2.600" width="8.800" height="5.600" rx="2.400" fill="#fff"/><rect x="-2" y="-.8" width="4" height="2" fill="#404040"/></g><g transform="translate(171.5 431.7)"><path d="M-1 -4.400l1.400 3.600h3.600v3h-8.400v-2.400h3.400z" fill="#fff"/><path d="M-4.800 3.800h9.600" stroke="#fff" stroke-width="1.100"/></g><g transform="translate(188.2 431.7)"><path d="M-4.400 -2.200h5.400v1.200h2l1.600 1.800v2h-9z" fill="#fff"/><circle cx="-2.200" cy="3" r="1" fill="#fff"/><circle cx="2.400" cy="3" r="1" fill="#fff"/></g><g transform="translate(105.6 452.2)"><circle cx="1" cy="-.6" r="3.500" fill="none" stroke="#fff" stroke-width="1.200" stroke-linejoin="round" stroke-linecap="round"/><path d="M1 -2.600v2.200l1.600 .8" stroke="#fff" stroke-width=".8" fill="none"/><rect x="-4.800" y="1" width="5" height="3" rx=".6" fill="#fff"/></g><g transform="translate(122.3 452.2)"><circle cx="0" cy=".2" r="3.700" fill="none" stroke="#fff" stroke-width="1.200" stroke-linejoin="round" stroke-linecap="round"/><path d="M-2.600 -1.600c1.600 .6 2.200 2 1.200 3.800M1 -3c-.6 1.600 .6 2.400 2.400 2" stroke="#fff" stroke-width="1" fill="none"/><circle cx="3" cy="-3" r="1.300" fill="#fff"/></g><g transform="translate(138.6 452.2)"><circle cx="-1" cy="-3.400" r="1.200" fill="#fff"/><path d="M-2.400 -1.600l3.400 .8 1.600 3 -1.600 2.600M-.8 0l-1 4.400" stroke="#fff" stroke-width="1.500" fill="none" stroke-linecap="round"/><path d="M-4.200 -3.600l2 1.400" stroke="#fff" stroke-width=".9"/></g><g transform="translate(155.2 452.2)"><path d="M0 -3.800l4.800 3.800 -4.800 3.800 -4.800 -3.800z" fill="#fff"/><circle cx="0" cy="0" r="1.500" fill="#404040"/></g><g transform="translate(171.5 452.2)"><path d="M-4.200 -3.400v4.800M-2.400 -3.400v4.800M-.6 -3.400v2" stroke="#fff" stroke-width="1.100"/><circle cx="1.600" cy=".4" r="2.200" fill="none" stroke="#fff" stroke-width="1.200" stroke-linejoin="round" stroke-linecap="round" stroke-width="1"/><path d="M3.200 2l1.800 2" stroke="#fff" stroke-width="1.200"/></g><g transform="translate(188.2 452.2)"><circle cx=".4" cy="0" r="3.700" fill="none" stroke="#fff" stroke-width="1.200" stroke-linejoin="round" stroke-linecap="round"/><path d="M-1.800 -2.600c.8 1.600 2.800 1.200 3 3.200M-3 1.600c1.400 -.4 2.400 .6 2 2" stroke="#fff" stroke-width="1.100" fill="none"/><path d="M-4.600 3.600l2.200 -1.600" stroke="#fff" stroke-width="1.300"/></g><circle cx="134.400" cy="530.600" r="2.300" fill="none" stroke="#f6d21a" stroke-width="1.300"/><path d="M134.400 528.300a2.300 2.300 0 0 1 2.300 2.300" fill="none" stroke="#e5342a" stroke-width="1.300"/><path d="M132.100 530.600a2.300 2.300 0 0 1 1.600 -2.200" fill="none" stroke="#2c6fd1" stroke-width="1.300"/></svg><div class="t" id="t69" style="left:90px;top:232.13px;font-size:4.6px;color:#333;letter-spacing:-0.145px;">4 Step Hub Spoke Diagram Design</div><div class="t" id="t70" style="left:141.2px;top:260.83px;font-size:3.4px;color:#444;letter-spacing:-0.193px;">Goal</div><div class="t" id="t71" style="left:142.2px;top:350.27px;font-size:5.4px;color:#fff;font-weight:700;letter-spacing:-0.346px;">Goal</div><div class="t" id="t72" style="left:89.7px;top:409.76px;font-size:4.2px;color:#fff;font-weight:700;letter-spacing:-0.067px;">Useful Icons</div><div class="t" id="t73" style="left:138px;top:528.26px;font-size:4.2px;color:#fff;font-weight:700;letter-spacing:-0.2px;">SlideModel...</div><div class="a" style="left:311.500px;top:220px;width:22.200px;height:22.500px;background:#fff;border:1px solid #dedede;border-radius:4.500px"></div><svg width="1200" height="743" viewBox="0 0 1200 743"><path d="M322.800 225.800c.3 1.700 .8 2.200 2.500 2.500 -1.700 .3 -2.200 .8 -2.500 2.500 -.3 -1.700 -.8 -2.200 -2.500 -2.500 1.700 -.3 2.200 -.8 2.500 -2.500z" fill="#222"/><circle cx="326.300" cy="232.400" r="1.300" fill="#222"/><path d="M321.400 229.800l-4.200 5.600M323.400 232l-3.600 4.800" stroke="#333" stroke-width=".9" stroke-dasharray="1.600 .8"/></svg><div class="a" style="left:310.500px;top:248px;width:742.200px;height:388px;background:radial-gradient(circle farthest-corner at center,#fbfbfb 0%,#f7f7f7 40%,#f2f2f2 66%,#ececec 80%,#e3e3e3 90%,#d6d6d6 100%);box-shadow:0 0 0 .5px #d9d9d9"></div><svg width="1200" height="743" viewBox="0 0 1200 743"><path d="M682 389.500l13 8.400h-4.800v5h-16.400v-5h-4.800z" fill="#5b3694"/><path d="M745.300 457l-5.200 13.400v-5.200h-5v-16.400h5v-5.200z" fill="#d01440"/><path d="M682 522.600l13 -7.400h-4.800v-4.200h-16.400v4.200h-4.800z" fill="#f07a0a"/><path d="M618.700 457l5.200 13.400v-5.200h5v-16.400h-5v-5.200z" fill="#f0c30f"/><circle cx="681.6" cy="335.5" r="52.7" fill="#fff" fill-opacity=".8"/><circle cx="681.6" cy="335.5" r="51.6" fill="#5b3694"/><circle cx="561" cy="457" r="52.7" fill="#fff" fill-opacity=".8"/><circle cx="561" cy="457" r="51.6" fill="#f0c30f"/><circle cx="803" cy="457" r="52.7" fill="#fff" fill-opacity=".8"/><circle cx="803" cy="457" r="51.6" fill="#d01440"/><circle cx="681.6" cy="578.2" r="52.7" fill="#fff" fill-opacity=".8"/><circle cx="681.6" cy="578.2" r="51.6" fill="#f07a0a"/><circle cx="682" cy="456.8" r="50.6" fill="#fff" fill-opacity=".8"/><circle cx="682" cy="456.8" r="49.5" fill="#1d67ad"/><rect x="435" y="293" width="493.900" height="329" fill="none" stroke="#858585" stroke-width="1.250"/><circle cx="435" cy="293" r="4.900" fill="#fff"/><circle cx="435" cy="293" r="3.450" fill="#fff" stroke="#444" stroke-width="1.450"/><circle cx="682" cy="293" r="4.900" fill="#fff"/><circle cx="682" cy="293" r="3.450" fill="#fff" stroke="#444" stroke-width="1.450"/><circle cx="928.9" cy="293" r="4.900" fill="#fff"/><circle cx="928.9" cy="293" r="3.450" fill="#fff" stroke="#444" stroke-width="1.450"/><circle cx="928.9" cy="457.3" r="4.900" fill="#fff"/><circle cx="928.9" cy="457.3" r="3.450" fill="#fff" stroke="#444" stroke-width="1.450"/><circle cx="435" cy="622" r="4.900" fill="#fff"/><circle cx="435" cy="622" r="3.450" fill="#fff" stroke="#444" stroke-width="1.450"/><circle cx="682" cy="622" r="4.900" fill="#fff"/><circle cx="682" cy="622" r="3.450" fill="#fff" stroke="#444" stroke-width="1.450"/><circle cx="928.9" cy="622" r="4.900" fill="#fff"/><circle cx="928.9" cy="622" r="3.450" fill="#fff" stroke="#444" stroke-width="1.450"/><rect x="427.600" y="450.300" width="13.800" height="13" rx="1" fill="#fff" stroke="#d0d0d0" stroke-width=".8"/><path d="M435.400 454.300l-2.800 2.700 2.800 2.700" stroke="#555" stroke-width="1.100" fill="none"/><rect x="1134.100" y="214.600" width="10.400" height="423.300" fill="#f5f5f5"/><rect x="1136.300" y="299.400" width="5.800" height="68" rx="2.900" fill="#6b6b6b"/><path d="M1136 221.800l3.400 -4.600 3.400 4.600z" fill="#555"/><path d="M1135.800 591.600l3.600 4.800 3.600 -4.800z" fill="#555"/><path d="M1135.800 606l3.600 -4.200 3.600 4.200zM1135.800 609.800l3.600 -4.200 3.600 4.200z" fill="#555"/><path d="M1135.800 613l3.600 4.200 3.600 -4.200zM1135.800 617l3.600 4.400 3.600 -4.400z" fill="#555"/></svg><div class="t" id="t74" style="left:662.6px;top:320.24px;font-size:10.8px;color:#fff;letter-spacing:-0.927px;">Research</div><div class="t" id="t75" style="left:660.7px;top:337.34px;font-size:10.8px;color:#fff;letter-spacing:-0.482px;">& Insights</div><div class="t" id="t76" style="left:767.5px;top:433.34px;font-size:10.8px;color:#fff;letter-spacing:-0.238px;">Implementation</div><div class="t" id="t77" style="left:799px;top:450.14px;font-size:10.8px;color:#fff;letter-spacing:-0.203px;">&</div><div class="t" id="t78" style="left:775.5px;top:466.74px;font-size:10.8px;color:#fff;letter-spacing:-0.673px;">Engagement</div><div class="t" id="t79" style="left:658.8px;top:565.74px;font-size:10.8px;color:#fff;letter-spacing:-0.583px;">Planning &</div><div class="t" id="t80" style="left:668.2px;top:577.54px;font-size:10.8px;color:#fff;letter-spacing:-1.002px;">Design</div><div class="t" id="t81" style="left:652.5px;top:436.93px;font-size:31.5px;color:#fff;letter-spacing:-1.887px;">Goal</div><div class="a" style="left:56.700px;top:637.900px;width:1088px;height:3px;background:#e3e3e3"></div><div class="a" style="left:56.700px;top:640.900px;width:1088px;height:14.200px;background:#f4f4f4;border-radius:0 0 6.500px 6.500px"></div><div class="a" style="left:880px;top:640.900px;width:27px;height:14.200px;background:#e0e0e0"></div><svg width="1200" height="743" viewBox="0 0 1200 743"><g fill="none" stroke="#444" stroke-width="1" stroke-linejoin="round" stroke-linecap="round"><g stroke-width="1.150"><path d="M123 644.800v7M123 644.800c-1.400 -.9 -3.200 -.9 -4.900 -.3v7.300c1.700 -.6 3.500 -.6 4.900 .3M123 644.800c1.400 -.9 3.200 -.9 4.900 -.3v4.200"/><path d="M124.400 650.600l1.500 1.800 2.800 -3.600"/></g><g stroke-width="1.100"><circle cx="232.400" cy="643.900" r="1.200"/><path d="M228.600 646.400c2.400 .9 5.200 .9 7.600 0M232.400 647v2.700M232.400 649.700l-2.200 3.400"/><path d="M232.600 651l1.600 1.800 3.400 -4.200"/></g><path d="M753.600 649.200h11.400M753.600 651.400h11.400M753.600 653.400h11.400M756.200 647l3.100 -3 3.100 3z"/><rect x="799.600" y="644.600" width="10.400" height="6.800" rx=".8"/><path d="M802 653.400h3"/><circle cx="807.800" cy="651.400" r="2.200" fill="#f3f3f3"/><circle cx="807.800" cy="651.400" r=".7"/><rect x="888.400" y="644" width="10.200" height="8.400" rx=".8"/><path d="M891.600 644v8.400M893.400 646.600h3.400v3.200h-3.400z"/><path d="M889.600 646h1M889.600 648h1M889.600 650h1" stroke-width=".7"/><rect x="918.200" y="643.800" width="3.600" height="3.400" rx=".5"/><rect x="923.600" y="643.800" width="3.600" height="3.400" rx=".5"/><rect x="918.200" y="649" width="3.600" height="3.400" rx=".5"/><rect x="923.600" y="649" width="3.600" height="3.400" rx=".5"/><path d="M951.400 644.600v7.800M951.400 644.600c-1.200 -.8 -3 -.8 -4.600 -.2v7.800c1.600 -.6 3.400 -.6 4.600 .2 1.200 -.8 3 -.8 4.600 -.2v-7.800c-1.600 -.600 -3.400 -.600 -4.600 .200z"/><path d="M948.200 646.400v4.400M954.600 646.400v4.400" stroke-width=".7"/><path d="M975.400 643.600h10.400M976.400 643.800v5.400h8.400v-5.400M980.600 649.200v3.400M978.400 652.800h4.400"/><path d="M979.200 645.200h2.800" stroke-width=".7"/><path d="M998.600 648.200h4.400M1084.600 648.200h5M1087.100 645.700v5" stroke-width=".9"/><path d="M1008 648.200h73.400" stroke-width=".8" stroke="#777"/><path d="M1044.700 646.400v3.600" stroke-width=".8" stroke="#777"/><rect x="1035.400" y="644" width="2.800" height="8.400" fill="#444" stroke="none"/><rect x="1126.600" y="645.600" width="5.200" height="5.200" rx="1"/><path d="M1129.200 642.200l-1.700 2h3.400zM1129.200 654.200l-1.700 -2h3.400zM1123.200 648.200l2 -1.700v3.400zM1135.200 648.200l-2 -1.700v3.400z" fill="#444" stroke-width=".5"/></g></svg><div class="t" id="t102" style="left:65px;top:643.56px;font-size:8px;color:#444;letter-spacing:-0.119px;">Slide 2 of 4</div><div class="t" id="t103" style="left:140px;top:643.56px;font-size:8px;color:#444;letter-spacing:-0.279px;">English (United States)</div><div class="t" id="t104" style="left:241px;top:643.56px;font-size:8px;color:#444;letter-spacing:-0.128px;">Accessibility: Good to go</div><div class="t" id="t105" style="left:766.2px;top:643.56px;font-size:8px;color:#444;letter-spacing:-0.141px;">Notes</div><div class="t" id="t106" style="left:811.2px;top:643.56px;font-size:8px;color:#444;letter-spacing:-0.21px;">Display Settings</div><div class="t" id="t107" style="left:1099.2px;top:644.05px;font-size:7.5px;color:#444;letter-spacing:-0.272px;">80%</div><div class="a" style="left:518.700px;top:207px;width:162.300px;height:454px;background:#fff;border:1.200px solid #929292;border-bottom:none;border-radius:3px 3px 0 0"></div><div class="a" style="left:522.600px;top:211.200px;width:154.400px;height:17.300px;background:#fff;border:1px solid #8d8d8d"></div><div class="a" style="left:520.800px;top:581.100px;width:157.400px;height:20.200px;background:#f2f2f2"></div><div class="a" style="left:543.400px;top:320.5px;width:134.800px;height:1px;background:#d6d6d6"></div><div class="a" style="left:543.400px;top:363.9px;width:134.800px;height:1px;background:#d6d6d6"></div><div class="a" style="left:543.400px;top:449.0px;width:134.800px;height:1px;background:#d6d6d6"></div><div class="a" style="left:543.400px;top:471.6px;width:134.800px;height:1px;background:#d6d6d6"></div><div class="a" style="left:543.400px;top:494.1px;width:134.800px;height:1px;background:#d6d6d6"></div><div class="a" style="left:543.400px;top:516.8px;width:134.800px;height:1px;background:#d6d6d6"></div><div class="a" style="left:543.400px;top:643.9px;width:134.800px;height:1px;background:#d6d6d6"></div><svg width="1200" height="743" viewBox="0 0 1200 743"><g fill="none" stroke-linejoin="round" stroke-linecap="round" stroke-width="1"><path d="M531.600 236.600l4.200 7.800M536.400 236.600l-4.200 7.800" stroke="#3b3b3b"/><circle cx="531.800" cy="245.400" r="1.300" stroke="#2b7cd3"/><circle cx="536.200" cy="245.400" r="1.300" stroke="#2b7cd3"/><path d="M531.400 264.800h-2a.9 .9 0 0 1 -.9 -.9v-6.400a.9 .9 0 0 1 .9 -.9h3.400" stroke="#3b3b3b"/><path d="M533.400 259h3.200l2.900 2.900v4.600a.9 .9 0 0 1 -.9 .9h-5.200a.9 .9 0 0 1 -.9 -.9v-6.600a.9 .9 0 0 1 .9 -.9z" stroke="#3b3b3b" fill="#fff"/><path d="M536.400 259.200v2.900h2.900" stroke="#3b3b3b"/><g transform="translate(528.8 276.2) scale(1.0)"><path d="M3 2.600h-1.800a.9 .9 0 0 0 -.9 .9v8a.9 .9 0 0 0 .9 .9h4.200M7.400 2.600h1.800a.9 .9 0 0 1 .9 .9v1.800" stroke="#e8912d" stroke-width="1.100"/><path d="M3 3.300c0 -1 .5 -1.300 1.100 -1.300 .1 -1.100 .6 -1.700 1.100 -1.700s1 .6 1.100 1.700c.6 0 1.100 .3 1.100 1.300z" stroke="#777" stroke-width=".9" fill="#fff"/></g><rect x="534.600" y="281.800" width="5.200" height="6.200" rx=".8" stroke="#3b3b3b" fill="#fff"/><g transform="translate(548.4 300.8) scale(1.05)"><path d="M3 2.600h-1.800a.9 .9 0 0 0 -.9 .9v8a.9 .9 0 0 0 .9 .9h4.200M7.400 2.600h1.800a.9 .9 0 0 1 .9 .9v1.800" stroke="#e8912d" stroke-width="1.100"/><path d="M3 3.300c0 -1 .5 -1.300 1.100 -1.300 .1 -1.100 .6 -1.700 1.100 -1.700s1 .6 1.100 1.700c.6 0 1.100 .3 1.100 1.300z" stroke="#777" stroke-width=".9" fill="#fff"/></g><path d="M556.200 311h2.400M556.800 309.200c.8 -.6 1.800 -.4 1.800 .6v1.200" stroke="#555" stroke-width=".8"/><circle cx="554.200" cy="313.200" r="1" fill="#e81123" stroke="none"/><circle cx="557" cy="313.200" r="1" fill="#e81123" stroke="none"/><circle cx="559.800" cy="313.200" r="1" fill="#2b7cd3" stroke="none"/><g transform="translate(570.4 300.8) scale(1.05)"><path d="M3 2.600h-1.800a.9 .9 0 0 0 -.9 .9v8a.9 .9 0 0 0 .9 .9h4.200M7.400 2.600h1.800a.9 .9 0 0 1 .9 .9v1.800" stroke="#e8912d" stroke-width="1.100"/><path d="M3 3.300c0 -1 .5 -1.300 1.100 -1.300 .1 -1.100 .6 -1.700 1.100 -1.700s1 .6 1.100 1.700c.6 0 1.100 .3 1.100 1.300z" stroke="#777" stroke-width=".9" fill="#fff"/></g><path d="M573.400 306.400h4.400M573.400 308.400h3" stroke="#2b7cd3" stroke-width=".8"/><path d="M575.400 305h3" stroke="#e8912d" stroke-width=".8"/><path d="M582.400 304.800l-5 6.200 -1.600 -1.200 5.400 -6c.8 -.8 1.800 .2 1.200 1z" stroke="#444" stroke-width=".8" fill="#fff"/><path d="M575.600 309.800c-1.600 0 -1.400 2.200 -3.200 3.200 2.200 .4 4.400 -.4 4.800 -2z" fill="#2b7cd3" stroke="#1e5fb4" stroke-width=".6"/><g transform="translate(592 300.8) scale(1.05)"><path d="M3 2.600h-1.800a.9 .9 0 0 0 -.9 .9v8a.9 .9 0 0 0 .9 .9h4.200M7.400 2.600h1.800a.9 .9 0 0 1 .9 .9v1.800" stroke="#e8912d" stroke-width="1.100"/><path d="M3 3.300c0 -1 .5 -1.300 1.100 -1.300 .1 -1.100 .6 -1.700 1.100 -1.700s1 .6 1.100 1.700c.6 0 1.100 .3 1.100 1.300z" stroke="#777" stroke-width=".9" fill="#fff"/></g><path d="M598 314l3 -7.200 3 7.200M599 311.800h4" stroke="#444" stroke-width="1"/><path d="M529 327.400h6l2 2.200" stroke="#2e9a47" fill="#cfeedd"/><path d="M529 327.400l2.400 2.200 -2.400 2.400" stroke="#2e9a47"/><path d="M531 327.300h4l1.600 1.800h-3.800z" fill="#2e9a47" stroke="none" opacity=".5"/><rect x="532.400" y="329.800" width="7.200" height="5.800" rx="1" stroke="#3b3b3b" fill="#fff"/><rect x="534.200" y="331.600" width="3.600" height="2.200" stroke="#666" stroke-width=".7"/><rect x="528.600" y="347.600" width="11" height="9.600" rx=".8" stroke="#3b3b3b" stroke-width="1.100"/><path d="M532.400 347.600v9.600M528.600 350h11" stroke="#3b3b3b"/><rect x="531.200" y="371.400" width="5" height="5" stroke="#3b3b3b"/><rect x="533.400" y="373.600" width="5" height="5" stroke="#3b3b3b"/><path d="M528.600 371.600v-2h2M537.800 369.600h2v2M539.800 378.800v2h-2M530.600 380.800h-2v-2M528.600 374v2.400M533 369.600h2.600M539.800 374v2.400M533 380.800h2.600" stroke="#3b3b3b" stroke-width=".9"/><rect x="529.600" y="391.400" width="4" height="4" stroke="#b0b0b0"/><rect x="531.800" y="393.600" width="4.600" height="4.600" stroke="#b0b0b0" fill="#ddd"/><rect x="534.600" y="396.200" width="4" height="4" stroke="#b0b0b0" fill="#fff"/><rect x="528.600" y="411" width="4.400" height="4.400" stroke="#b0b0b0"/><rect x="535" y="417.200" width="4.600" height="4.600" stroke="#b0b0b0"/><path d="M531.800 417.200h2.400v2.400M535.400 414h-.8v.8" stroke="#b0b0b0" stroke-width=".8"/><rect x="533.200" y="415.600" width="1.600" height="1.600" stroke="#b0b0b0" stroke-width=".7"/><rect x="529.400" y="437" width="6.800" height="4.800" rx=".8" stroke="#3b3b3b"/><path d="M530.800 437v-1.400a2 2 0 0 1 4 0v1.400" stroke="#3b3b3b"/><rect x="528.600" y="456.400" width="7" height="4.800" rx="2.400" stroke="#3b3b3b"/><rect x="532.600" y="458.800" width="7" height="4.800" rx="2.400" stroke="#3b3b3b"/><path d="M528.800 503v-3.200h3.200M528.800 499.800l3.400 3.400" stroke="#2b7cd3" stroke-width="1.100"/><path d="M540 507.400v3.200h-3.200M540 510.600l-3.400 -3.400" stroke="#2e9a47" stroke-width="1.100"/><path d="M535.200 500.800h5M537.700 499.400v1.400M535.800 500.800c.4 2.200 1.800 3.600 4 4.200M539.600 500.800c-.4 2.200 -1.800 3.600 -4 4.200" stroke="#2e9a47" stroke-width="1"/><path d="M529.400 506.400c1.400 -1 3.400 -.8 3.400 1v3.200M532.800 508.200c-2.200 -.2 -3.600 .2 -3.600 1.400 0 1.400 2.600 1.400 3.600 -.2" stroke="#2b7cd3" stroke-width="1.200"/><rect x="528.600" y="523.800" width="10.800" height="8.400" rx="1" stroke="#3b3b3b"/><path d="M528.800 530.600l2.800 -3 2.400 2.400" stroke="#3b3b3b" stroke-width=".9"/><circle cx="536.400" cy="526.400" r=".8" fill="#3b3b3b" stroke="none"/><rect x="533.400" y="530" width="4" height="3.400" rx="1.700" stroke="#2b7cd3" fill="#fff" stroke-width=".9"/><rect x="536" y="530" width="4" height="3.400" rx="1.700" stroke="#2b7cd3" fill="none" stroke-width=".9"/><path d="M529.200 547.200c.6 -2.400 2.400 -3.400 4.400 -2.800" stroke="#2b7cd3" stroke-width="1.100"/><path d="M528.600 544.200l.5 3.200 3 -.8" stroke="#2b7cd3"/><path d="M532.800 544.600h3l2 2.400" stroke="#2e9a47"/><rect x="533.200" y="548" width="6.400" height="5.600" rx=".8" stroke="#3b3b3b" fill="#fff"/><path d="M535 550h3M535 551.800h3" stroke="#666" stroke-width=".7"/><path d="M531.800 566.4 a3.200 3.200 0 1 0 0 6" stroke="#2b7cd3" stroke-width="1"/><path d="M530 570.8l1.800 1.600 -1.800 1.600" stroke="#2b7cd3" stroke-width=".9"/><path d="M532.600 563.6h3.400l1.600 1.600" stroke="#2e9a47" stroke-width=".9"/><path d="M532.600 563.6l1.400 1.400 -1.400 1.400" stroke="#2e9a47" stroke-width=".9"/><circle cx="536.800" cy="567.600" r="2.200" stroke="#3b3b3b"/><path d="M534.600 575l2.200 -4.400 2.200 4.400M535.400 573.600h2.800" stroke="#3b3b3b" stroke-width=".9"/><path d="M531.800 587.8 a3.200 3.200 0 1 0 0 6" stroke="#2b7cd3" stroke-width="1"/><path d="M530 592.1999999999999l1.800 1.600 -1.800 1.600" stroke="#2b7cd3" stroke-width=".9"/><path d="M532.600 585.0h3.400l1.600 1.600" stroke="#2e9a47" stroke-width=".9"/><path d="M532.600 585.0l1.400 1.400 -1.400 1.400" stroke="#2e9a47" stroke-width=".9"/><circle cx="536.800" cy="588.400" r="2.300" stroke="#3b3b3b"/><circle cx="536.800" cy="593.400" r="2.300" stroke="#3b3b3b"/><rect x="535" y="605.400" width="4.600" height="10.800" rx=".6" stroke="#3b3b3b"/><path d="M530.800 606v9.600" stroke="#2b7cd3" stroke-dasharray="1.200 1"/><path d="M529.400 607l1.400 -1.600 1.400 1.600M529.400 614.600l1.400 1.600 1.400 -1.600" stroke="#2b7cd3"/><path d="M532.600 616.200h2" stroke="#555" stroke-width=".8"/><path d="M529.600 630.200l3.400 -3.400 3.400 3.400 -3.400 3.400z" stroke="#3b3b3b"/><path d="M537 628.600c.8 1 1 1.800 .4 2.400" stroke="#3b3b3b"/><path d="M539.400 631.400l-4.800 4.600 -1.400 -1.400 5 -4.400c.8 -.6 1.800 .4 1.200 1.200z" stroke="#3b3b3b" stroke-width=".8" fill="#fff"/><path d="M533.600 635c-1.400 0 -1.400 1.800 -3 2.600 2 .4 4 -.2 4.400 -1.600z" fill="#2b7cd3" stroke="#2b7cd3" stroke-width=".5"/><path d="M530.400 651.800h9v6h-5.600l-2.200 2v-2h-1.200z" stroke="#3b3b3b" fill="#fff"/><rect x="528" y="649" width="4.600" height="4.600" fill="#fff" stroke="none"/><path d="M530.600 649.200v5M528.200 651.700h5" stroke="#2e9a47" stroke-width="1"/><path d="M669 371.7l3.600 3.300 -3.600 3.300" stroke="#222" stroke-width="1.100"/><path d="M669 393.09999999999997l3.600 3.300 -3.600 3.300" stroke="#b0b0b0" stroke-width="1.100"/><path d="M669 414.09999999999997l3.600 3.300 -3.600 3.300" stroke="#b0b0b0" stroke-width="1.100"/><path d="M669 457.3l3.600 3.300 -3.600 3.300" stroke="#222" stroke-width="1.100"/><path d="M662.600 391.4v10" stroke="#d0d0d0" stroke-width=".9"/><path d="M662.600 412.4v10" stroke="#d0d0d0" stroke-width=".9"/><path d="M662.600 455.6v10" stroke="#d0d0d0" stroke-width=".9"/></g><path d="M661.300 593.400v10.400l2.500 -2.300 1.700 3.900 1.500 -.7 -1.700 -3.800h3.300z" fill="#fff" stroke="#222" stroke-width=".8" stroke-linejoin="round"/></svg><div class="t" id="t82" style="left:527.6px;top:214.36px;font-size:8px;color:#777;letter-spacing:-0.346px;">Search the menus</div><div class="t" id="t83" style="left:546.2px;top:237.08px;font-size:9px;color:#1c1c1c;letter-spacing:-0.477px;">Cu<u>t</u></div><div class="t" id="t84" style="left:546.2px;top:257.68px;font-size:9px;color:#1c1c1c;letter-spacing:-0.379px;"><u>C</u>opy</div><div class="t" id="t85" style="left:547px;top:279.98px;font-size:9px;color:#111;font-weight:700;letter-spacing:-0.408px;">Paste Options:</div><div class="t" id="t86" style="left:546.2px;top:327.38px;font-size:9px;color:#1c1c1c;letter-spacing:-0.405px;">Ch<u>a</u>nge Layout...</div><div class="t" id="t87" style="left:546.2px;top:347.88px;font-size:9px;color:#1c1c1c;letter-spacing:-0.356px;">Show Te<u>x</u>t Pane</div><div class="t" id="t88" style="left:546.2px;top:370.48px;font-size:9px;color:#1c1c1c;letter-spacing:-0.326px;"><u>G</u>roup</div><div class="t" id="t89" style="left:546.6px;top:391.18px;font-size:9px;color:#a6a6a6;letter-spacing:-0.174px;">Bring to F<u>r</u>ont</div><div class="t" id="t90" style="left:546.6px;top:412.18px;font-size:9px;color:#a6a6a6;letter-spacing:-0.354px;">Send to Bac<u>k</u></div><div class="t" id="t91" style="left:546.2px;top:433.28px;font-size:9px;color:#1c1c1c;letter-spacing:-0.308px;"><u>L</u>ock</div><div class="t" id="t92" style="left:546.2px;top:455.58px;font-size:9px;color:#1c1c1c;letter-spacing:-0.308px;">L<u>i</u>nk</div><div class="t" id="t93" style="left:546.2px;top:478.18px;font-size:9px;color:#1c1c1c;letter-spacing:-0.469px;"><u>S</u>ave as Picture...</div><div class="t" id="t94" style="left:546.6px;top:500.78px;font-size:9px;color:#1c1c1c;letter-spacing:-0.321px;">Tran<u>s</u>late</div><div class="t" id="t95" style="left:546.2px;top:523.38px;font-size:9px;color:#1c1c1c;letter-spacing:-0.177px;">View <u>A</u>lt Text...</div><div class="t" id="t96" style="left:546.2px;top:544.08px;font-size:9px;color:#1c1c1c;letter-spacing:-0.387px;"><u>R</u>eset Graphic</div><div class="t" id="t97" style="left:546.2px;top:564.98px;font-size:9px;color:#1c1c1c;letter-spacing:-0.138px;"><u>C</u>onvert to Text</div><div class="t" id="t98" style="left:546.2px;top:585.88px;font-size:9px;color:#1c1c1c;letter-spacing:-0.292px;">Con<u>v</u>ert to Shapes</div><div class="t" id="t99" style="left:546.2px;top:606.58px;font-size:9px;color:#1c1c1c;letter-spacing:-0.318px;">Si<u>z</u>e and Position...</div><div class="t" id="t100" style="left:546.2px;top:627.28px;font-size:9px;color:#1c1c1c;letter-spacing:-0.271px;">F<u>o</u>rmat Object...</div><div class="t" id="t101" style="left:546.6px;top:649.88px;font-size:9px;color:#1c1c1c;letter-spacing:-0.266px;">New Co<u>m</u>ment</div><div class="a" style="left:515px;top:661px;width:170px;height:8px;background:#fff;opacity:0"></div><div class="t" id="t0" style="left:1022px;top:704.01px;font-size:15.5px;color:#5a5a5a;letter-spacing:-0.742px;">SLIDEMODEL.COM</div>
</body>
</html>
